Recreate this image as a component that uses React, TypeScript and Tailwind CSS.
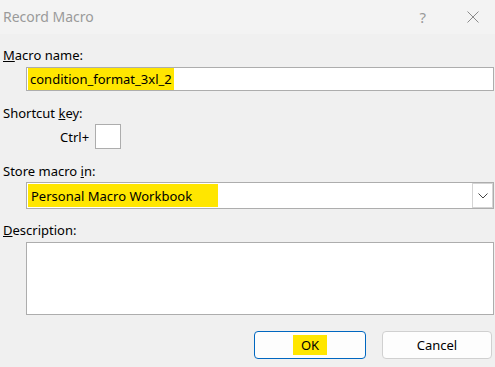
export default function App() {
  return (
    <div
      className="w-[495px] h-[367px] bg-[#f0f0f0] text-[13px] leading-4 text-black overflow-hidden"
      style={{ fontFamily: '"Noto Sans", "Open Sans", sans-serif' }}
    >
      {/* title bar */}
      <div className="h-[34px] bg-[#f3f3f3] flex items-center pl-[3px]">
        <span className="text-[14px] text-[#9a9a9a]">Record Macro</span>
        <span className="ml-auto text-[15px] text-[#9a9a9a] mr-[41px]">?</span>
        <svg width="12" height="12" viewBox="0 0 12 12" className="mr-[16px]">
          <path d="M0.5 0.5 L11.5 11.5 M11.5 0.5 L0.5 11.5" stroke="#8a8a8a" strokeWidth="1" />
        </svg>
      </div>

      <div className="flex flex-col pl-[3px] pr-[1px]">
        <div className="mt-[13px]">
          <u>M</u>acro name:
        </div>
        <div className="mt-[4px] ml-[23px] h-[24px] border border-[#adadad] bg-white flex items-center pl-px">
          <span className="h-[22px] w-[146px] bg-[#ffe600] pl-[2px] flex items-center">
            condition_format_3xl_2
          </span>
        </div>

        <div className="mt-[14px]">
          Shortcut <u>k</u>ey:
        </div>
        <div className="mt-[3px] flex items-center">
          <span className="ml-[57px]">Ctrl+</span>
          <div className="ml-[6px] w-[26px] h-[25px] border border-[#adadad] bg-white" />
        </div>

        <div className="mt-[14px]">
          Store macro <u>i</u>n:
        </div>
        <div className="mt-[3px] ml-[23px] h-[27px] border border-[#adadad] bg-white flex items-center pl-px">
          <span className="h-[23px] w-[190px] bg-[#ffe600] pl-[3px] flex items-center">
            Personal Macro Workbook
          </span>
          <div className="ml-auto h-[25px] w-[21px] border border-[#d4d4d4] flex items-center justify-center">
            <svg width="10" height="6" viewBox="0 0 10 6">
              <path d="M0.5 0.5 L5 5 L9.5 0.5" fill="none" stroke="#444" strokeWidth="1" />
            </svg>
          </div>
        </div>

        <div className="mt-[13px]">
          <u>D</u>escription:
        </div>
        <div className="mt-[4px] ml-[23px] h-[73px] border border-[#adadad] bg-white" />

        <div className="mt-[16px] flex justify-end gap-[16px] pr-[2px]">
          <button className="w-[112px] h-[28px] rounded-[4px] border border-[#0067c0] bg-[#fdfdfd] flex items-center justify-center">
            <span className="h-[20px] px-[8px] bg-[#ffe600] flex items-center">OK</span>
          </button>
          <button className="w-[110px] h-[28px] rounded-[4px] border border-[#d0d0d0] bg-[#fdfdfd] flex items-center justify-center">
            Cancel
          </button>
        </div>
      </div>
    </div>
  );
}
